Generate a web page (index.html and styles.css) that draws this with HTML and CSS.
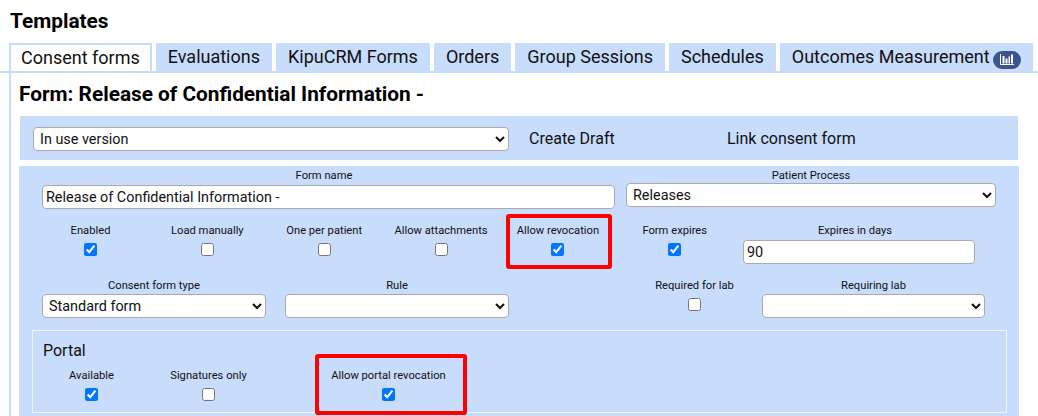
FILE: index.html
```html
<!DOCTYPE html>
<html lang="en">
<head>
    <meta charset="UTF-8">
    <meta name="viewport" content="width=device-width, initial-scale=1.0">
    <title>Templates</title>
    <link rel="stylesheet" href="styles.css">
</head>
<body>
    <h1 class="page-title">Templates</h1>

    <div class="tabs">
        <div class="tab active">Consent forms</div>
        <div class="tab">Evaluations</div>
        <div class="tab">KipuCRM Forms</div>
        <div class="tab">Orders</div>
        <div class="tab">Group Sessions</div>
        <div class="tab">Schedules</div>
        <div class="tab">Outcomes Measurement
            <span class="badge">
                <svg width="14" height="11" viewBox="0 0 14 11">
                    <path d="M0.5 0V10.5H14" fill="none" stroke="#fff" stroke-width="1"/>
                    <rect x="2.5" y="2" width="2" height="7.5" fill="#fff"/>
                    <rect x="5.5" y="4.5" width="2" height="5" fill="#fff"/>
                    <rect x="8.5" y="2.5" width="1.5" height="7" fill="#fff"/>
                    <rect x="11" y="0.5" width="2" height="9" fill="#fff"/>
                </svg>
            </span>
        </div>
    </div>

    <div class="tab-content">
        <h2 class="form-title">Form: Release of Confidential Information -</h2>

        <div class="panel toolbar">
            <select class="version-select">
                <option>In use version</option>
            </select>
            <span class="draft-link">Create Draft</span>
            <span>Link consent form</span>
        </div>

        <div class="panel form-panel">
            <div class="row row-name">
                <div class="field name-field">
                    <label>Form name</label>
                    <input type="text" value="Release of Confidential Information -">
                </div>
                <div class="field process-field">
                    <label>Patient Process</label>
                    <select><option>Releases</option></select>
                </div>
            </div>

            <div class="row row-checks">
                <div class="check"><label>Enabled</label><input type="checkbox" checked></div>
                <div class="check"><label>Load manually</label><input type="checkbox"></div>
                <div class="check"><label>One per patient</label><input type="checkbox"></div>
                <div class="check"><label>Allow attachments</label><input type="checkbox"></div>
                <div class="check"><label>Allow revocation</label><input type="checkbox" checked></div>
                <div class="check"><label>Form expires</label><input type="checkbox" checked></div>
                <div class="field expires-field">
                    <label>Expires in days</label>
                    <input type="text" value="90">
                </div>
            </div>

            <div class="row row-type">
                <div class="field type-field">
                    <label>Consent form type</label>
                    <select><option>Standard form</option></select>
                </div>
                <div class="field rule-field">
                    <label>Rule</label>
                    <select><option></option></select>
                </div>
                <div class="check lab-check"><label>Required for lab</label><input type="checkbox"></div>
                <div class="field lab-field">
                    <label>Requiring lab</label>
                    <select><option></option></select>
                </div>
            </div>

            <div class="portal">
                <div class="portal-title">Portal</div>
                <div class="portal-row">
                    <div class="check"><label>Available</label><input type="checkbox" checked></div>
                    <div class="check"><label>Signatures only</label><input type="checkbox"></div>
                    <div class="check portal-revocation"><label>Allow portal revocation</label><input type="checkbox" checked></div>
                </div>
            </div>
        </div>
    </div>

    <div class="highlight highlight-revocation"></div>
    <div class="highlight highlight-portal"></div>
</body>
</html>
```

FILE: styles.css
```css
body {
    position: relative;
    height: 416px;
    margin: 0;
    overflow: hidden;
    background-color: white;
    color: #111;
    font-family: Roboto, Arial, sans-serif;
    font-size: 16px;
}

.page-title {
    height: 43px;
    margin: 0;
    padding: 9px 0 0 10px;
    box-sizing: border-box;
    font-size: 20.8px;
    line-height: 24px;
    font-weight: 700;
    color: black;
}

/* tabs */
.tabs {
    display: flex;
    gap: 4px;
    height: 30px;
    padding-left: 9px;
    background: linear-gradient(#c8dcfc, #c8dcfc) left bottom / 100% 2px no-repeat;
}

.tab {
    height: 30px;
    padding: 0 12px;
    box-sizing: border-box;
    background-color: #c8dcfc;
    font-size: 18px;
    line-height: 28px;
    white-space: nowrap;
}

.tab.active {
    padding: 0 10px;
    height: 28px;
    border: 2px solid #c8dcfc;
    border-bottom: 0;
    background-color: white;
    line-height: 26px;
}

.badge {
    display: inline-flex;
    justify-content: center;
    align-items: center;
    width: 28px;
    height: 18px;
    margin-left: -1px;
    border-radius: 9px;
    background-color: #3b5490;
    vertical-align: -2px;
}

.tab-content {
    margin-left: 9px;
    border-left: 2px solid #c8dcfc;
    padding-left: 8px;
}

.form-title {
    height: 43px;
    margin: 0;
    padding-top: 9px;
    box-sizing: border-box;
    font-size: 20.8px;
    line-height: 24px;
    font-weight: 700;
    color: black;
}

.panel {
    background-color: #c8dcfc;
}

.toolbar {
    display: flex;
    align-items: center;
    width: 998px;
    height: 44px;
    margin-left: 1px;
    padding-left: 13px;
    box-sizing: border-box;
}

.version-select {
    width: 476px;
    margin-top: 2px;
}

.draft-link {
    width: 198px;
    margin-left: 20px;
}

.form-panel {
    width: 1000px;
    height: 260px;
    margin-top: 6px;
    padding-top: 3px;
    box-sizing: border-box;
}

/* form controls */
label {
    display: block;
    height: 13px;
    font-size: 11.2px;
    line-height: 13px;
    text-align: center;
    white-space: nowrap;
}

select,
input[type="text"] {
    height: 24px;
    box-sizing: border-box;
    border: 1px solid #aaa;
    border-radius: 4px;
    background-color: white;
    color: #111;
    font-family: Roboto, Arial, sans-serif;
    font-size: 14.4px;
}

input[type="text"] {
    padding: 0 3px;
}

select {
    padding: 0 2px;
}

.field select,
.field input {
    display: block;
    width: 100%;
}

.check {
    display: flex;
    flex-direction: column;
    align-items: center;
    gap: 6px;
}

.check input {
    width: 13px;
    height: 13px;
    margin: 0;
}

.row {
    display: flex;
}

.row-name {
    padding-left: 23px;
}

.name-field {
    width: 573px;
}

.name-field label {
    margin-bottom: 3px;
    padding-right: 9px;
}

.process-field {
    width: 370px;
    margin-left: 11px;
}

.process-field label {
    margin-bottom: 1px;
}

.row-checks {
    margin-top: 15px;
    padding-left: 13.1px;
}

.row-checks .check {
    width: 116.85px;
}

.expires-field {
    width: 232px;
    margin-left: 9.8px;
}

.expires-field label {
    margin-bottom: 3px;
    padding-right: 8px;
}

.row-type {
    margin-top: 15px;
    padding-left: 23px;
}

.row-type .field {
    width: 224px;
}

.row-type .field label {
    margin-bottom: 2px;
}

.rule-field {
    margin-left: 19px;
}

.lab-check {
    width: 117px;
    margin-left: 127px;
}

.row-type .lab-field {
    width: 223px;
    margin-left: 9px;
}

/* portal box */
.portal {
    width: 975px;
    height: 83px;
    margin: 12px 0 0 13px;
    padding: 10px 0 0 0;
    box-sizing: border-box;
    border: 1px solid #eef4ff;
}

.portal-title {
    height: 20px;
    padding-left: 10px;
    font-size: 16px;
    line-height: 20px;
}

.portal-row {
    display: flex;
    margin-top: 8px;
}

.portal-row .check {
    width: 117px;
}

.portal-row .portal-revocation {
    width: 243px;
}

/* red annotation boxes */
.highlight {
    position: absolute;
    box-sizing: border-box;
    border: 4px solid #ff0000;
    border-radius: 3px;
}

.highlight-revocation {
    left: 506px;
    top: 214px;
    width: 106px;
    height: 55px;
}

.highlight-portal {
    left: 315px;
    top: 354px;
    width: 152px;
    height: 61px;
}
```
